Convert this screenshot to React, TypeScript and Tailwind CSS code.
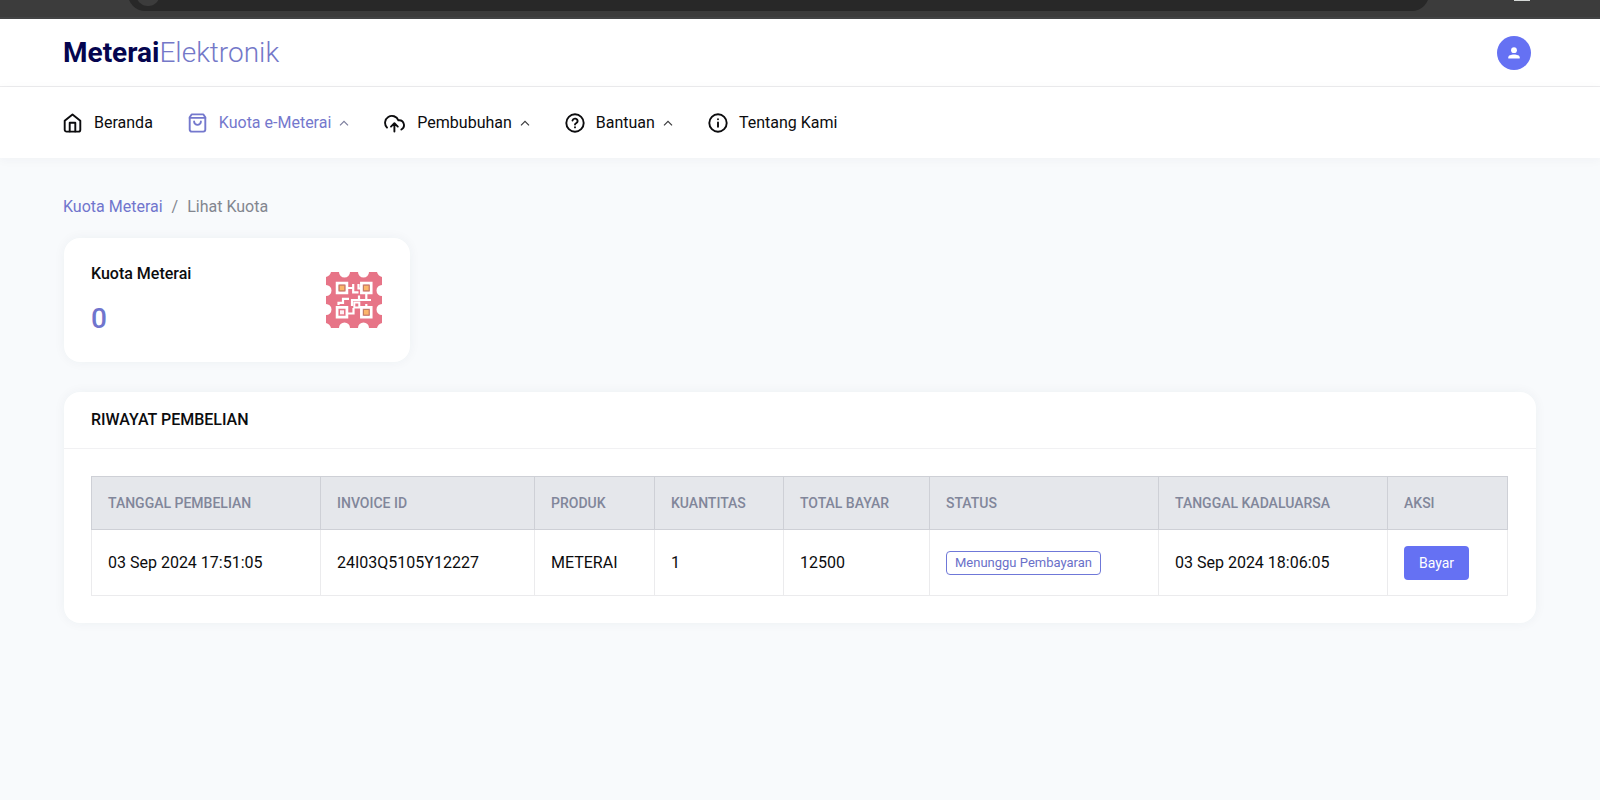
import type { ReactNode } from 'react';

type NavItem = { label: string; icon: ReactNode; active?: boolean; menu?: boolean };

function Stroke({ wide, children }: { wide?: boolean; children: ReactNode }) {
  return (
    <svg
      viewBox={wide ? '0 0 22 20' : '0 0 20 20'}
      className={wide ? 'h-5 w-[22px]' : 'h-5 w-5'}
      fill="none"
      stroke="currentColor"
      strokeWidth={1.9}
      strokeLinecap="round"
      strokeLinejoin="round"
      aria-hidden="true"
    >
      {children}
    </svg>
  );
}

const navItems: NavItem[] = [
  {
    label: 'Beranda',
    icon: (
      <Stroke>
        <path d="M1.700 7.800 9.500 1.500l7.800 6.300v8.900a1.900 1.900 0 0 1-1.900 1.900H3.600a1.900 1.900 0 0 1-1.900-1.900Z" />
        <path d="M6.700 18.400V9.800h5.600v8.600" />
      </Stroke>
    ),
  },
  {
    label: 'Kuota e-Meterai',
    active: true,
    menu: true,
    icon: (
      <Stroke>
        <path d="M1.700 4.300 3.600 1.400h11.800l1.900 2.900v12.300a2 2 0 0 1-2 2H3.700a2 2 0 0 1-2-2Z" />
        <path d="M1.700 4.900h15.600M12.900 8.500a3.400 3.400 0 0 1-6.800 0" />
      </Stroke>
    ),
  },
  {
    label: 'Pembubuhan',
    menu: true,
    icon: (
      <Stroke wide>
        <path d="M3 14.600A6.900 6.900 0 1 1 14.400 7.300h.9a4.900 4.900 0 0 1 2.100 9.200" />
        <path d="M10.400 18.600v-7.900M7 13.600l3.400-3.400 3.400 3.400" />
      </Stroke>
    ),
  },
  {
    label: 'Bantuan',
    menu: true,
    icon: (
      <Stroke>
        <circle cx="10" cy="10" r="8.700" />
        <path d="M7.500 7.500a2.600 2.600 0 0 1 5.100.8c0 1.700-2.600 2.100-2.600 3.200M10 14.300v.1" />
      </Stroke>
    ),
  },
  {
    label: 'Tentang Kami',
    icon: (
      <Stroke>
        <circle cx="10" cy="10" r="8.700" />
        <path d="M10 9.500v4.300M10 6.200v.1" />
      </Stroke>
    ),
  },
];

function StampIcon() {
  return (
    <svg viewBox="0 0 56 56" className="h-14 w-14" aria-hidden="true">
      <path
        fill="#e77487"
        d="M5 0H13A5.500 5.500 0 0 0 24 0H32A5.500 5.500 0 0 0 43 0H51Q52 4 56 5V13A5.500 5.500 0 0 0 56 24V32A5.500 5.500 0 0 0 56 43V51Q52 52 51 56H43A5.500 5.500 0 0 0 32 56H24A5.500 5.500 0 0 0 13 56H5Q4 52 0 51V43A5.500 5.500 0 0 0 0 32V24A5.500 5.500 0 0 0 0 13V5Q4 4 5 0Z"
      />
      <g fill="none" stroke="#fff">
        <path
          strokeWidth="2.700"
          d="M11.100 11.100h9.800v9.800h-9.800ZM35.400 11.100h9.800v9.800h-9.800ZM11.100 35.400h9.800v9.800h-9.800ZM35.400 35.400h9.800v9.800h-9.800Z"
        />
        <path
          strokeWidth="2.200"
          d="M22 16h5M27.200 12v8.300h5.300M32.500 12v4.500H36M40.300 22v6M12.500 33v-2.200h4.500v-4H23M26 34v-6h19M33 23.500V28M22 41.500h5.500V36M34 35h6.300v-3"
        />
        <path strokeWidth="2" d="M28.300 30.500h5v5h-5Z" />
      </g>
      <path fill="#fdb56a" stroke="#bf8063" d="M13.200 13.200h5.600v5.600h-5.600ZM37.500 13.200h5.600v5.600h-5.600ZM37.500 37.500h5.600v5.600h-5.600Z" />
      <path fill="#fdf0f3" d="M14 38.300h4v4h-4Z" />
    </svg>
  );
}

const headers = [
  { label: 'Tanggal Pembelian', width: 'w-[229px]' },
  { label: 'Invoice ID', width: 'w-[214px]' },
  { label: 'Produk', width: 'w-[120px]' },
  { label: 'Kuantitas', width: 'w-[129px]' },
  { label: 'Total Bayar', width: 'w-[146px]' },
  { label: 'Status', width: 'w-[229px]' },
  { label: 'Tanggal Kadaluarsa', width: 'w-[229px]' },
  { label: 'Aksi', width: 'w-[120px]' },
];

const rows = [
  {
    bought: '03 Sep 2024 17:51:05',
    invoice: '24I03Q5105Y12227',
    product: 'METERAI',
    quantity: '1',
    total: '12500',
    status: 'Menunggu Pembayaran',
    expires: '03 Sep 2024 18:06:05',
  },
];

const cell = 'border border-[#ebebed] px-4';

export default function App() {
  return (
    <div className="min-h-screen bg-[#f8fafc] font-[Roboto,sans-serif] text-base text-[#0c0c0e]">
      <div className="flex h-[19px] items-start overflow-hidden border-b-2 border-[#434445] bg-[#3c3c3c] pl-32">
        <div className="-mt-[23px] flex h-[34px] flex-1 items-center rounded-full bg-[#282828] pl-2">
          <span className="h-6 w-6 rounded-full bg-[#3c3c3c]" />
        </div>
        <div className="flex w-[171px] pl-[85px]">
          <span className="h-px w-4 bg-[#d5d8d6]" />
        </div>
      </div>

      <header className="flex h-[68px] items-center justify-between border-b border-[#ececee] bg-white pl-[63px] pr-[69px]">
        <a href="#beranda" className="pt-px text-[28px] leading-8 text-[#7478c8]">
          <span className="font-bold text-[#05054f]">Meterai</span>
          <span className="font-light">Elektronik</span>
        </a>
        <button type="button" aria-label="Akun" className="flex h-[34px] w-[34px] items-center justify-center rounded-full bg-[#6571f3] text-white">
          <svg viewBox="0 0 12 12" className="h-3 w-3" fill="currentColor" aria-hidden="true">
            <circle cx="6" cy="3.200" r="2.900" />
            <path d="M.3 11.600v-1.300C.3 8.300 3 7.400 6 7.400s5.700.9 5.700 2.900v1.300Z" />
          </svg>
        </button>
      </header>

      <nav className="flex h-[71px] items-center gap-[35px] bg-white px-[63px] shadow-[0_2px_10px_rgba(40,50,70,0.04)]">
        {navItems.map((item) => (
          <a
            key={item.label}
            href="#menu"
            className={item.active ? 'flex items-center text-[#7478cd]' : 'flex items-center'}
          >
            {item.icon}
            <span className="ml-[11px]">{item.label}</span>
            {item.menu && (
              <svg viewBox="0 0 10 6" className="ml-2 h-1.5 w-2.5" fill="none" stroke={item.active ? '#7b7d9c' : '#3a3a3c'} strokeWidth="1.200" aria-hidden="true">
                <path d="m1 5.300 4-4 4 4" />
              </svg>
            )}
          </a>
        ))}
      </nav>

      <main className="px-16 pt-9">
        <div className="-ml-px flex gap-[9px] pt-px leading-6 text-[#82868f]">
          <a href="#kuota" className="text-[#7075cd]">Kuota Meterai</a>
          <span>/</span>
          <span>Lihat Kuota</span>
        </div>

        <section className="mt-[19px] flex h-[124px] w-[346px] items-center justify-between rounded-2xl bg-white pr-7 pl-[27px] shadow-[0_0_12px_rgba(40,50,70,0.05)]">
          <div className="pb-1">
            <h2 className="font-medium leading-6">Kuota Meterai</h2>
            <p className="mt-[17px] text-[28px] font-medium leading-8 text-[#7075cd]">0</p>
          </div>
          <StampIcon />
        </section>

        <section className="mt-[30px] rounded-2xl bg-white shadow-[0_0_12px_rgba(40,50,70,0.05)]">
          <h2 className="border-b border-[#f1f1f3] px-[27px] py-4 font-medium leading-6 uppercase">Riwayat Pembelian</h2>
          <div className="pt-[27px] pr-7 pb-[27px] pl-[27px]">
            <table className="w-full table-fixed border-collapse text-left">
              <thead>
                <tr className="h-[53px] bg-[#e5e7eb]">
                  {headers.map((header) => (
                    <th
                      key={header.label}
                      className={`${header.width} border border-[#ced0d6] px-4 text-sm font-medium text-[#81869a] uppercase`}
                    >
                      {header.label}
                    </th>
                  ))}
                </tr>
              </thead>
              <tbody>
                {rows.map((row) => (
                  <tr key={row.invoice} className="h-[66px]">
                    <td className={cell}>{row.bought}</td>
                    <td className={cell}>{row.invoice}</td>
                    <td className={cell}>{row.product}</td>
                    <td className={cell}>{row.quantity}</td>
                    <td className={cell}>{row.total}</td>
                    <td className={cell}>
                      <span className="inline-flex h-6 items-center rounded border border-[#6f78d8] px-2 align-middle text-[13px] text-[#6a70c9]">
                        {row.status}
                      </span>
                    </td>
                    <td className={cell}>{row.expires}</td>
                    <td className={cell}>
                      <button type="button" className="flex h-[34px] items-center rounded bg-[#6571f3] px-[15px] text-sm text-white">
                        Bayar
                      </button>
                    </td>
                  </tr>
                ))}
              </tbody>
            </table>
          </div>
        </section>
      </main>
    </div>
  );
}
